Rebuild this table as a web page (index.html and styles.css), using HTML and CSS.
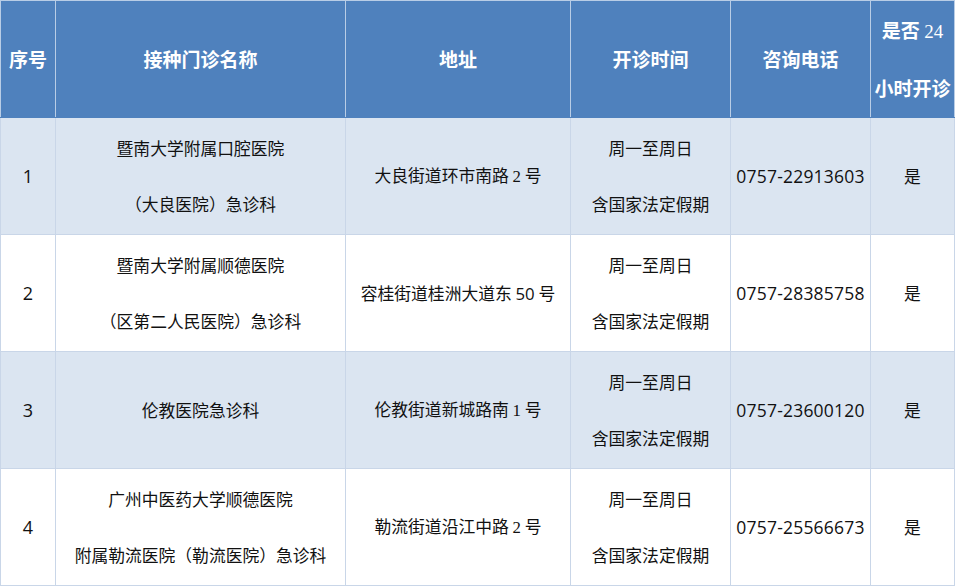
FILE: index.html
```html
<!DOCTYPE html>
<html lang="zh">
<head>
<meta charset="utf-8">
<link rel="stylesheet" href="styles.css">
</head>
<body>
<table class="grid">
  <colgroup>
    <col class="c1"><col class="c2"><col class="c3"><col class="c4"><col class="c5"><col class="c6">
  </colgroup>
  <thead>
    <tr class="head">
      <th>序号</th>
      <th>接种门诊名称</th>
      <th>地址</th>
      <th>开诊时间</th>
      <th>咨询电话</th>
      <th><span class="line">是否 <span class="serif">24</span></span><span class="line">小时开诊</span></th>
    </tr>
  </thead>
  <tbody>
    <tr class="odd">
      <td class="num">1</td>
      <td><span class="line">暨南大学附属口腔医院</span><span class="line">（大良医院）急诊科</span></td>
      <td>大良街道环市南路 <span class="serif">2</span> 号</td>
      <td><span class="line">周一至周日</span><span class="line">含国家法定假期</span></td>
      <td class="phone">0757-22913603</td>
      <td>是</td>
    </tr>
    <tr class="even">
      <td class="num">2</td>
      <td><span class="line">暨南大学附属顺德医院</span><span class="line">（区第二人民医院）急诊科</span></td>
      <td>容桂街道桂洲大道东 <span class="num-inline">50</span> 号</td>
      <td><span class="line">周一至周日</span><span class="line">含国家法定假期</span></td>
      <td class="phone">0757-28385758</td>
      <td>是</td>
    </tr>
    <tr class="odd">
      <td class="num">3</td>
      <td>伦教医院急诊科</td>
      <td>伦教街道新城路南 <span class="serif">1</span> 号</td>
      <td><span class="line">周一至周日</span><span class="line">含国家法定假期</span></td>
      <td class="phone">0757-23600120</td>
      <td>是</td>
    </tr>
    <tr class="even">
      <td class="num">4</td>
      <td><span class="line">广州中医药大学顺德医院</span><span class="line">附属勒流医院（勒流医院）急诊科</span></td>
      <td>勒流街道沿江中路 <span class="serif">2</span> 号</td>
      <td><span class="line">周一至周日</span><span class="line">含国家法定假期</span></td>
      <td class="phone">0757-25566673</td>
      <td>是</td>
    </tr>
  </tbody>
</table>
</body>
</html>
```
FILE: styles.css
```css
html, body {
  margin: 0;
  padding: 0;
  background: #ffffff;
}
body {
  font-family: "Noto Sans CJK SC", "Noto Sans", sans-serif;
  color: #111111;
  text-spacing-trim: space-all;
}
.grid {
  border-collapse: collapse;
  table-layout: fixed;
  width: 954px;
  border: 1px solid #c9d6e8;
}
.c1 { width: 55px; }
.c2 { width: 290px; }
.c3 { width: 225px; }
.c4 { width: 160px; }
.c5 { width: 140px; }
.c6 { width: 84px; }
th, td {
  border: 1px solid #c9d6e8;
  text-align: center;
  vertical-align: middle;
  padding: 0;
}
.head th {
  background: #4f81bd;
  color: #ffffff;
  font-weight: 700;
  font-size: 19px;
  height: 116px;
  border-color: #b9cde6;
  border-bottom-color: #4f81bd;
}
td {
  font-size: 16.8px;
  height: 116px;
  line-height: 56px;
}
th {
  line-height: 56px;
}
.line {
  display: block;
}
.odd td { background: #dbe5f1; }
.even td { background: #ffffff; }
.serif {
  font-family: "Liberation Serif", serif;
  font-weight: 400;
}
.num-inline {
  font-family: "Open Sans", sans-serif;
}
.num {
  font-family: "Open Sans", sans-serif;
  font-size: 18px;
}
.phone {
  font-family: "Open Sans", sans-serif;
  font-size: 17.5px;
  letter-spacing: 0.2px;
}
```
